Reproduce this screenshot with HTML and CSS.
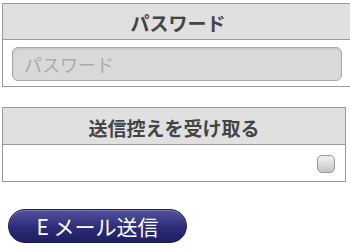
FILE: index.html
```html
<!DOCTYPE html>
<html lang="ja">
<head>
<meta charset="utf-8">
<link rel="stylesheet" href="styles.css">
</head>
<body>
<div class="page">
  <section class="panel panel-wide">
    <div class="panel-head">パスワード</div>
    <div class="panel-body">
      <input class="pw" type="password" placeholder="パスワード">
    </div>
  </section>
  <section class="panel panel-narrow">
    <div class="panel-head">送信控えを受け取る</div>
    <div class="panel-body row-end">
      <span class="check"></span>
    </div>
  </section>
  <button class="send">E メール送信</button>
</div>
</body>
</html>
```
FILE: styles.css
```css
html, body {
  margin: 0;
  padding: 0;
  background: #fff;
  overflow: hidden;
}
.page {
  padding: 3px 0 0 2px;
  display: flex;
  flex-direction: column;
  align-items: flex-start;
  font-family: "Noto Sans CJK JP", "Noto Sans", sans-serif;
}
.panel {
  border: 1px solid #9a9a9a;
  box-sizing: border-box;
  background: #fff;
}
.panel-wide { width: 352px; }
.panel-narrow { width: 344px; margin-top: 20px; }
.panel-head {
  height: 36px;
  background: #e0e0e0;
  border-bottom: 1px solid #9a9a9a;
  display: flex;
  align-items: center;
  justify-content: center;
  font-size: 19px;
  font-weight: bold;
  color: #444;
  padding-top: 2px;
  box-sizing: border-box;
}
.panel-narrow .panel-head { height: 37px; }
.panel-body {
  height: 46px;
  box-sizing: border-box;
  padding: 7px 0 0 9px;
}
.pw {
  display: block;
  width: 330px;
  height: 34px;
  box-sizing: border-box;
  border: 1px solid #aaa;
  border-radius: 6px;
  background: #d9d9d9;
  box-shadow: inset 0 1px 2px rgba(0,0,0,0.12);
  padding: 0 11px;
  font-family: "Noto Sans CJK JP", "Noto Sans", sans-serif;
  font-size: 18px;
  color: #444;
  outline: none;
}
.pw::placeholder { color: #aaa; }
.row-end {
  height: 36px;
  padding: 0 10px 0 0;
  display: flex;
  align-items: center;
  justify-content: flex-end;
}
.check {
  width: 18px;
  height: 18px;
  box-sizing: border-box;
  border: 1px solid #999;
  border-radius: 5px;
  background: linear-gradient(#f4f4f4, #c4c4c4);
  margin-top: 1px;
}
.send {
  margin: 27px 0 0 6px;
  width: 179px;
  height: 34px;
  border-radius: 17px;
  border: 1px solid #1c1c55;
  background: linear-gradient(#52529f, #2c2c78 55%, #1f1f62);
  color: #fff;
  font-family: "Noto Sans CJK JP", "Noto Sans", sans-serif;
  font-size: 21px;
  padding: 0;
  box-shadow: inset 0 1px 0 rgba(255,255,255,0.25);
}
```
